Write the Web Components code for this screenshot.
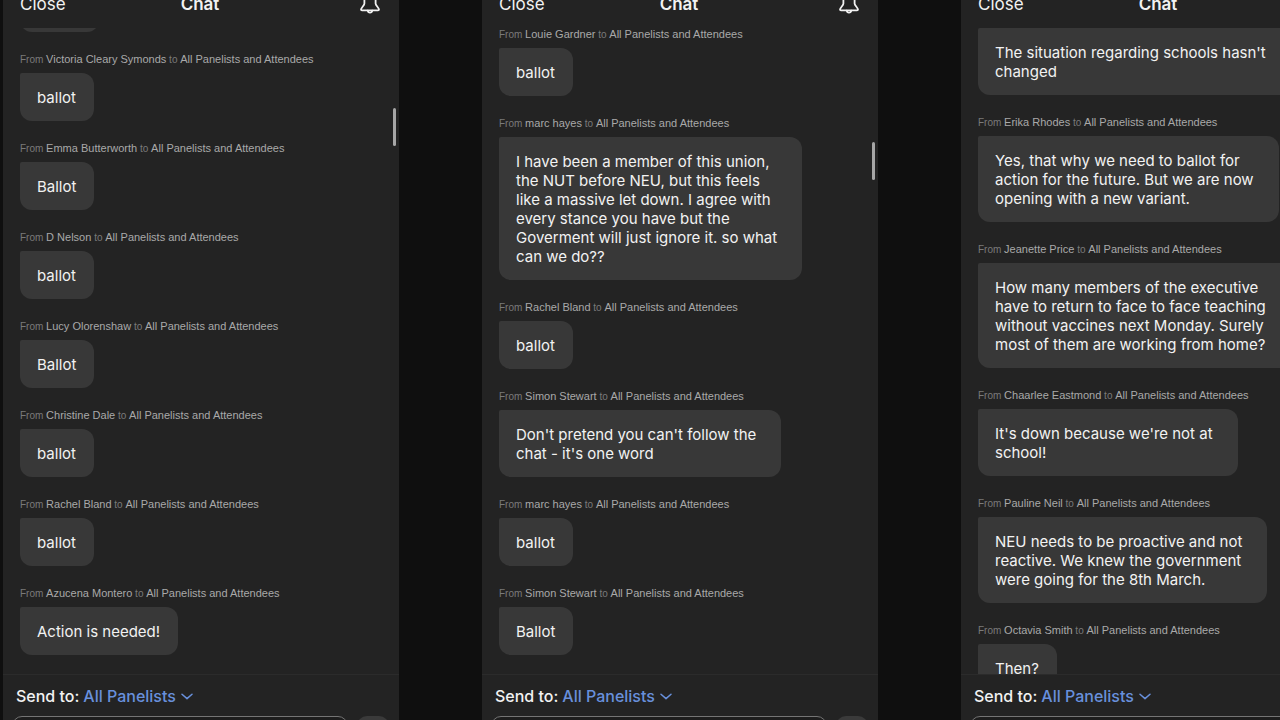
<!DOCTYPE html>
<html lang="en">
<head>
<meta charset="UTF-8">
<meta name="viewport" content="width=device-width, initial-scale=1">
<title>Chat</title>
<style>
    body {
        margin: 0;
        background: #0f0f0f;
        overflow: hidden;
    }
</style>
</head>
<body>
<chat-wall>
    <chat-panel thumb="high">
        <chat-message blank></chat-message>
        <chat-message from="Victoria Cleary Symonds">ballot</chat-message>
        <chat-message from="Emma Butterworth">Ballot</chat-message>
        <chat-message from="D Nelson">ballot</chat-message>
        <chat-message from="Lucy Olorenshaw">Ballot</chat-message>
        <chat-message from="Christine Dale">ballot</chat-message>
        <chat-message from="Rachel Bland">ballot</chat-message>
        <chat-message from="Azucena Montero">Action is needed!</chat-message>
    </chat-panel>
    <chat-panel thumb="low">
        <chat-message from="Louie Gardner">ballot</chat-message>
        <chat-message from="marc hayes" long>I have been a member of this union,<br>the NUT before NEU, but this feels<br>like a massive let down. I agree with<br>every stance you have but the<br>Goverment will just ignore it. so what<br>can we do??</chat-message>
        <chat-message from="Rachel Bland">ballot</chat-message>
        <chat-message from="Simon Stewart" long>Don't pretend you can't follow the<br>chat - it's one word</chat-message>
        <chat-message from="marc hayes">ballot</chat-message>
        <chat-message from="Simon Stewart">Ballot</chat-message>
    </chat-panel>
    <chat-panel from-top>
        <chat-message long>The situation regarding schools hasn't<br>changed</chat-message>
        <chat-message from="Erika Rhodes" long>Yes, that why we need to ballot for<br>action for the future. But we are now<br>opening with a new variant.</chat-message>
        <chat-message from="Jeanette Price" long>How many members of the executive<br>have to return to face to face teaching<br>without vaccines next Monday. Surely<br>most of them are working from home?</chat-message>
        <chat-message from="Chaarlee Eastmond" long>It's down because we're not at<br>school!</chat-message>
        <chat-message from="Pauline Neil" long>NEU needs to be proactive and not<br>reactive. We knew the government<br>were going for the 8th March.</chat-message>
        <chat-message from="Octavia Smith">Then?</chat-message>
    </chat-panel>
</chat-wall>

<script>
class ChatWall extends HTMLElement {
    constructor(){
        super();
        this.attachShadow({ mode: 'open' });
        this.shadowRoot.innerHTML = `
            <style>
                /* the last panel runs off the right edge */
                :host {
                    display: grid;
                    grid-template-columns: repeat(3, minmax(0, 1fr));
                    gap: 83px;
                    height: 100vh;
                    margin: 0 -77px 0 3px;
                    font-family: Inter, "Liberation Sans", sans-serif;
                    color: #f2f2f2;
                }
            </style>
            <slot></slot>
        `;
    }
}

class ChatMessage extends HTMLElement {
    constructor(){
        super();
        this.attachShadow({ mode: 'open' });
        this.shadowRoot.innerHTML = `
            <style>
                :host {
                    display: flex;
                    flex: none;
                    flex-direction: column;
                    align-items: flex-start;
                    gap: 7px;
                }

                #meta {
                    font: 10px/13px "Liberation Sans", sans-serif;
                    color: #7a7a7a;
                    white-space: nowrap;
                }

                #meta b {
                    font-size: 11px;
                    font-weight: 500;
                    color: #a9a9a9;
                }

                #meta[hidden] {
                    display: none;
                }

                #bubble {
                    box-sizing: border-box;
                    min-height: 48px;
                    padding: 15px 18px 14px 17px;
                    border-radius: 2px 12px 12px 12px;
                    background: #383838;
                    font-size: 15px;
                    line-height: 19px;
                    white-space: nowrap;
                }

                :host([long]) #bubble {
                    padding-right: 25px;
                }

                :host([blank]) #bubble {
                    min-width: 79px;
                }
            </style>
            <div id="meta">From <b id="from"></b> to <b>All Panelists and Attendees</b></div>
            <div id="bubble"><slot></slot></div>
        `;
    }

    connectedCallback(){
        const from = this.getAttribute('from');
        this.shadowRoot.querySelector('#from').textContent = from || '';
        this.shadowRoot.querySelector('#meta').hidden = !from;
    }
}

class SendBar extends HTMLElement {
    constructor(){
        super();
        this.attachShadow({ mode: 'open' });
        this.shadowRoot.innerHTML = `
            <style>
                :host {
                    display: block;
                    flex: none;
                    box-sizing: border-box;
                    height: 46px;
                    overflow: hidden;
                    padding: 9px 9px 0;
                    border-top: 1px solid #2b2b2b;
                }

                #target {
                    display: flex;
                    align-items: center;
                    gap: 4px;
                    padding-left: 4px;
                    font-size: 16px;
                    font-weight: 500;
                    line-height: 24px;
                }

                select {
                    appearance: none;
                    field-sizing: content;
                    margin: 0;
                    padding: 0;
                    border: 0;
                    background: none;
                    color: #6890dc;
                    font: inherit;
                    cursor: pointer;
                }

                #compose {
                    display: flex;
                    gap: 9px;
                    margin-top: 8px;
                }

                input {
                    flex: 1;
                    min-width: 0;
                    box-sizing: border-box;
                    height: 36px;
                    padding: 0 12px;
                    border: 1px solid #747474;
                    border-radius: 10px;
                    background: #1d1d1d;
                    color: inherit;
                    font: inherit;
                }

                button {
                    width: 32px;
                    height: 36px;
                    margin-right: 1px;
                    border: 0;
                    border-radius: 10px;
                    background: #3a3a3a;
                }
            </style>
            <div id="target">
                <label for="to">Send to:</label>
                <select id="to"><option>All Panelists</option></select>
                <svg width="13" height="7" viewBox="0 0 13 7" fill="none" stroke="#6890dc" stroke-width="1.5" stroke-linecap="round" stroke-linejoin="round" aria-hidden="true"><path d="M2 1.2 7 5.6 12 1.2"/></svg>
            </div>
            <div id="compose">
                <input type="text" aria-label="Message">
                <button type="button" aria-label="More"></button>
            </div>
        `;
    }
}

class ChatPanel extends HTMLElement {
    constructor(){
        super();
        this.attachShadow({ mode: 'open' });
        this.shadowRoot.innerHTML = `
            <style>
                :host {
                    display: flex;
                    flex-direction: column;
                    min-height: 0;
                    background: #232323;
                }

                /* the title bar is scrolled partly out of view */
                header {
                    display: grid;
                    flex: none;
                    grid-template-columns: 1fr auto 1fr;
                    align-items: end;
                    align-content: end;
                    box-sizing: border-box;
                    height: 28px;
                    padding: 0 19px 12px 17px;
                    line-height: 24px;
                }

                button {
                    padding: 0;
                    border: 0;
                    background: none;
                    color: inherit;
                    font: inherit;
                    cursor: pointer;
                }

                #close {
                    justify-self: start;
                    font-size: 17px;
                }

                h1 {
                    margin: 0;
                    font-size: 17px;
                    font-weight: 600;
                }

                #bell {
                    justify-self: end;
                    padding-bottom: 2px;
                }

                #bell svg {
                    display: block;
                }

                #list {
                    position: relative;
                    display: flex;
                    flex: 1;
                    flex-direction: column;
                    justify-content: flex-end;
                    gap: 21px;
                    min-height: 0;
                    overflow: hidden;
                    padding: 0 17px 19px;
                    box-sizing: border-box;
                }

                :host([from-top]) #list {
                    justify-content: flex-start;
                }

                #thumb {
                    position: absolute;
                    top: 80px;
                    right: 3px;
                    width: 3px;
                    height: 38px;
                    border-radius: 2px;
                    background: #a6a6a6;
                }

                :host([thumb="low"]) #thumb {
                    top: 114px;
                }

                :host(:not([thumb])) #thumb {
                    display: none;
                }
            </style>
            <header>
                <button id="close" type="button">Close</button>
                <h1>Chat</h1>
                <button id="bell" type="button" aria-label="Notifications">
                    <svg width="20" height="24" viewBox="0 0 20 24" fill="none" stroke="#f2f2f2" stroke-width="1.8" stroke-linejoin="round" stroke-linecap="round"><path d="M10 2.2C6.4 2.2 4.4 4.8 4.4 8.2V13.5C4.4 15.6 1 17.8 1 19.6C1 20.1 1.4 20.4 2 20.4H18C18.600 20.4 19 20.1 19 19.6C19 17.8 15.6 15.6 15.6 13.5V8.2C15.6 4.8 13.6 2.2 10 2.2Z"/><path d="M7.8 20.6C8 22 8.9 22.6 10 22.6S12 22 12.2 20.6"/></svg>
                </button>
            </header>
            <div id="list">
                <slot></slot>
                <div id="thumb"></div>
            </div>
            <send-bar></send-bar>
        `;
    }
}

customElements.define('chat-wall', ChatWall);
customElements.define('chat-message', ChatMessage);
customElements.define('send-bar', SendBar);
customElements.define('chat-panel', ChatPanel);
</script>
</body>
</html>
